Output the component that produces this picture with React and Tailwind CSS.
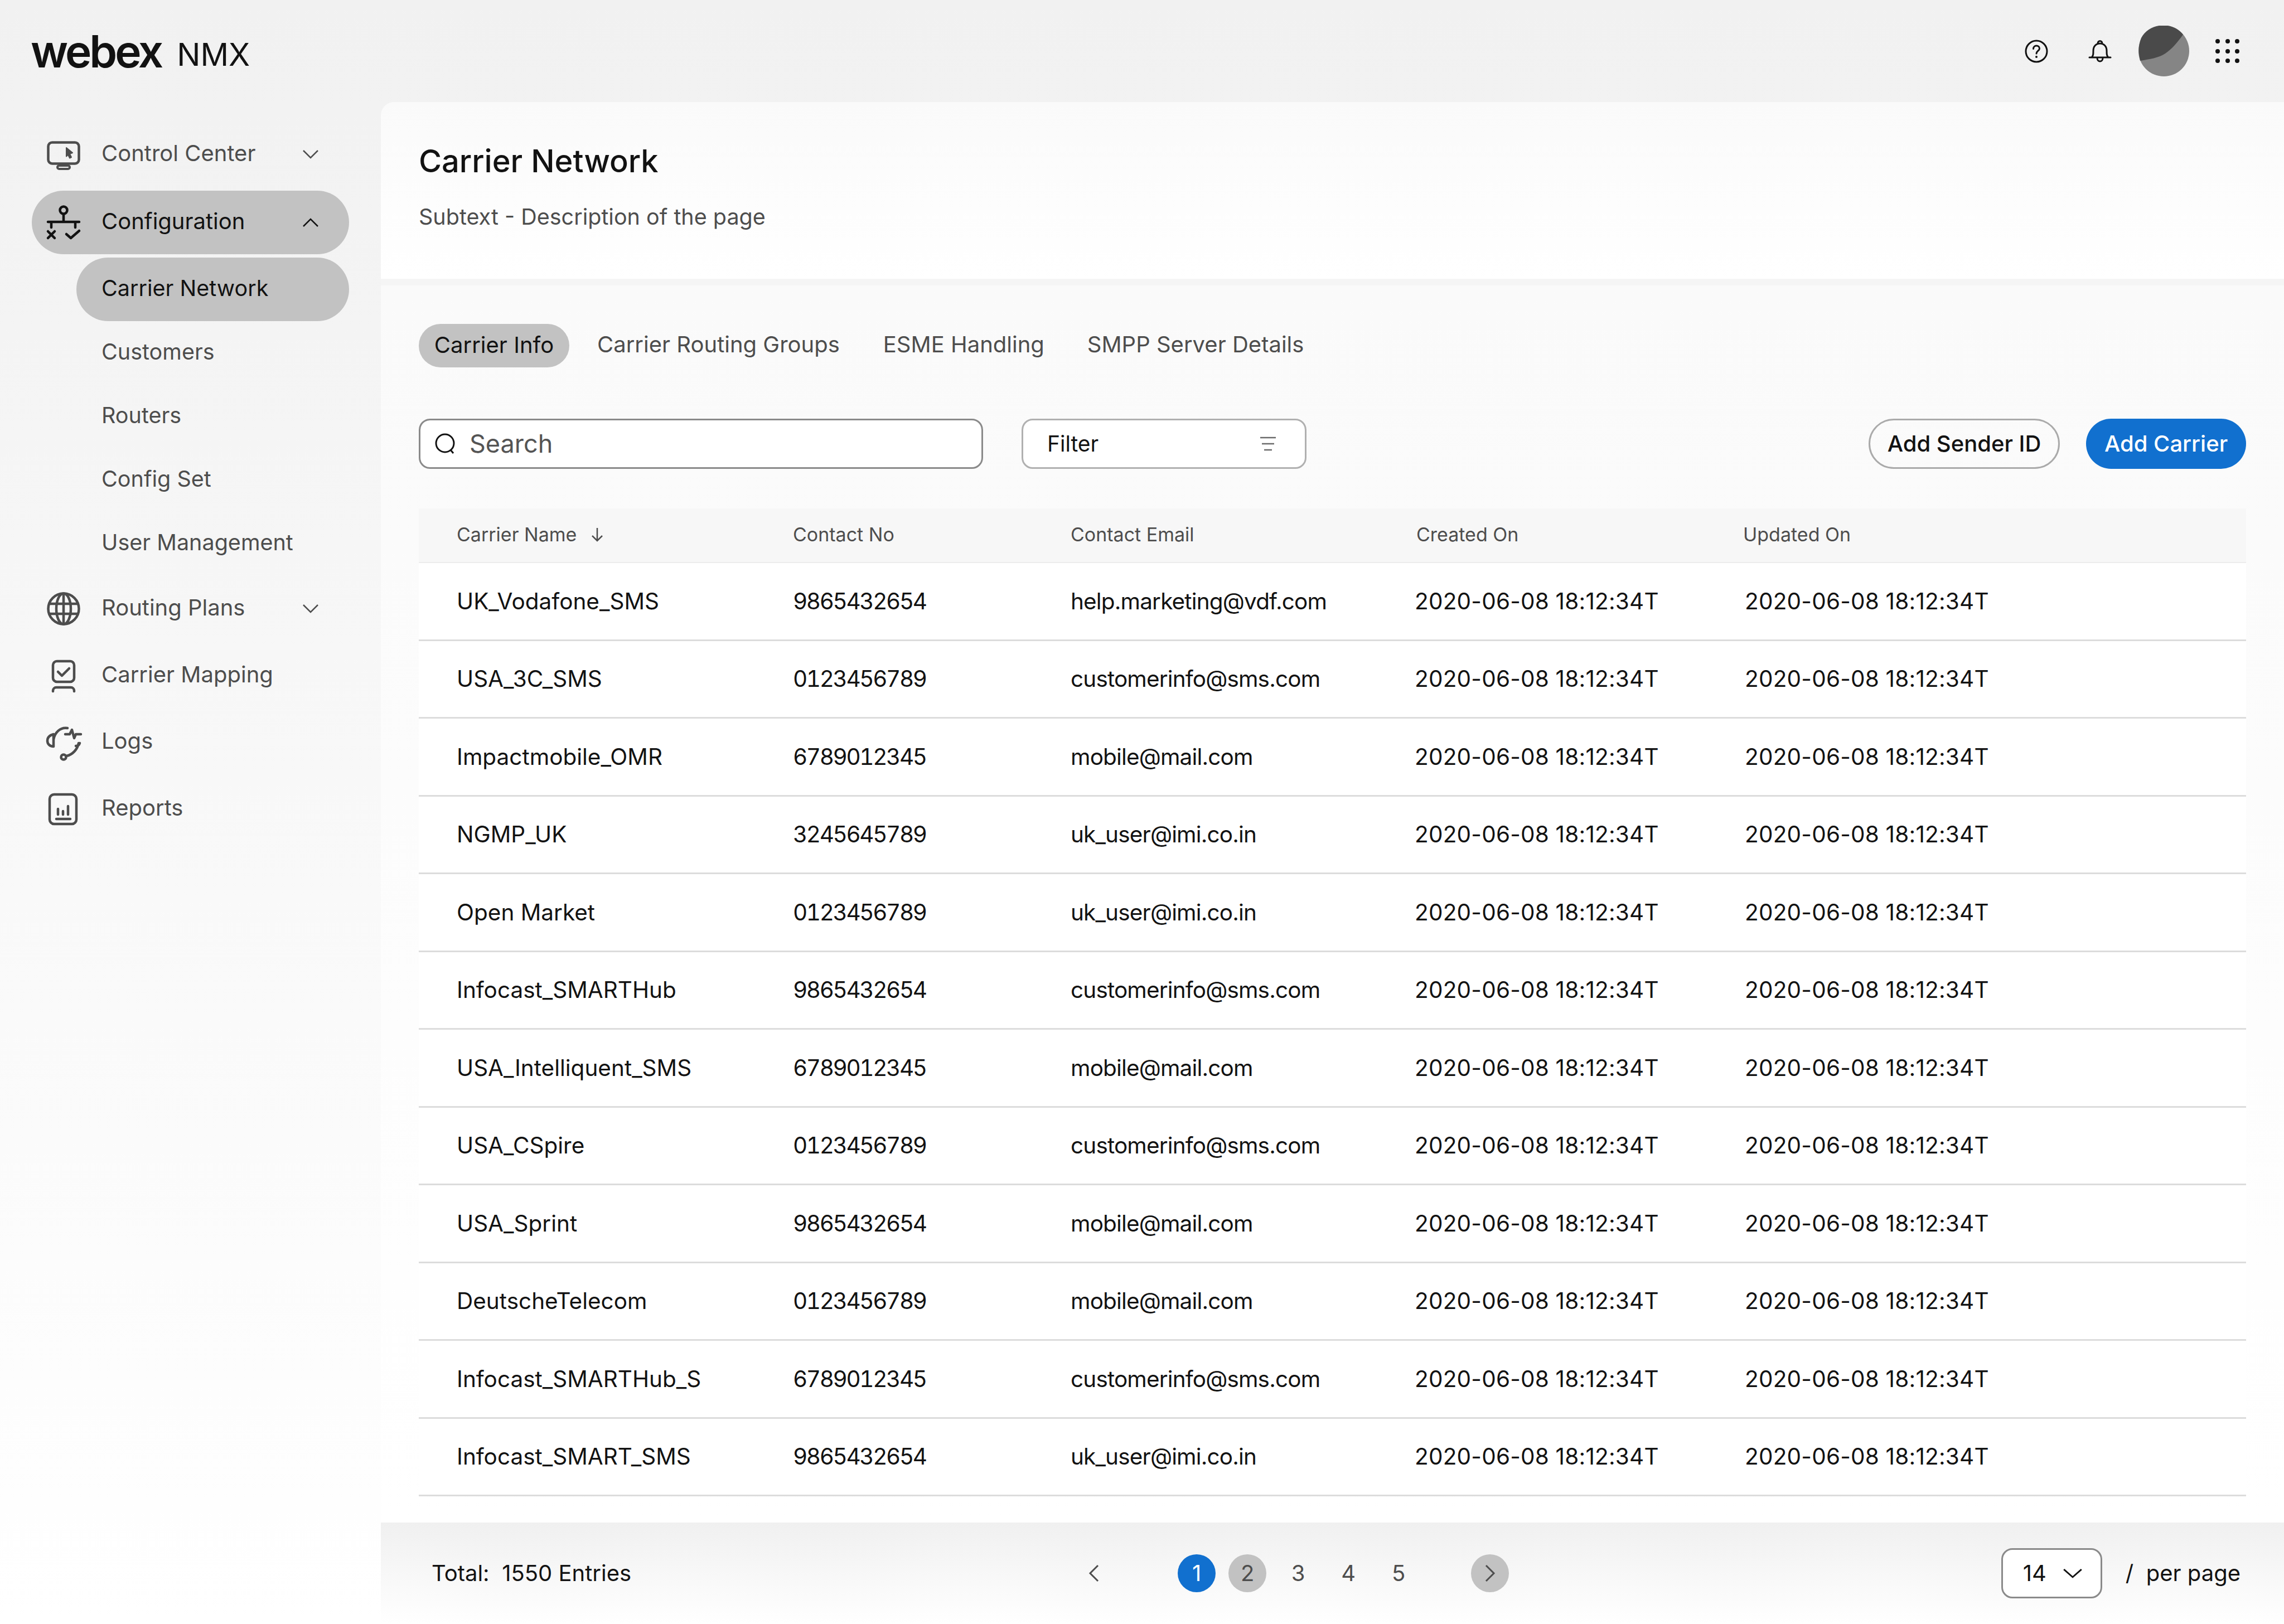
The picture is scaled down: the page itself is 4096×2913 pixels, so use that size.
import React from 'react';

const rows = [
  ['UK_Vodafone_SMS', '9865432654', 'help.marketing@vdf.com'],
  ['USA_3C_SMS', '0123456789', 'customerinfo@sms.com'],
  ['Impactmobile_OMR', '6789012345', 'mobile@mail.com'],
  ['NGMP_UK', '3245645789', 'uk_user@imi.co.in'],
  ['Open Market', '0123456789', 'uk_user@imi.co.in'],
  ['Infocast_SMARTHub', '9865432654', 'customerinfo@sms.com'],
  ['USA_Intelliquent_SMS', '6789012345', 'mobile@mail.com'],
  ['USA_CSpire', '0123456789', 'customerinfo@sms.com'],
  ['USA_Sprint', '9865432654', 'mobile@mail.com'],
  ['DeutscheTelecom', '0123456789', 'mobile@mail.com'],
  ['Infocast_SMARTHub_S', '6789012345', 'customerinfo@sms.com'],
  ['Infocast_SMART_SMS', '9865432654', 'uk_user@imi.co.in'],
];

const stamp = '2020-06-08 18:12:34T';
const gridCols = 'grid grid-cols-[671px_498px_617px_592px_1fr]';

const Icon = ({ children }) => (
  <svg width="60" height="60" viewBox="0 0 60 60" fill="none" stroke="currentColor" strokeWidth="4.5" strokeLinecap="round" strokeLinejoin="round" className="shrink-0 overflow-visible">
    {children}
  </svg>
);

const MonitorIcon = () => (
  <Icon>
    <rect x="2.5" y="8.5" width="55" height="38" rx="7" />
    <rect x="19" y="50" width="22" height="6" rx="3" strokeWidth="4" />
    <path d="M35 18l11 9-5 2 3 6-3 1.5-3-6-3 3z" fill="currentColor" strokeWidth="2" />
  </Icon>
);

const NetworkIcon = () => (
  <Icon>
    <circle cx="30" cy="8" r="6.5" />
    <path d="M30 15v14M2 29h56M8 29v10M51 29v10M2 46l12 12M14 46L2 58M35 51l8 7 15-13" />
  </Icon>
);

const GlobeIcon = () => (
  <Icon>
    <circle cx="30" cy="30" r="27.5" />
    <ellipse cx="30" cy="30" rx="13" ry="27.5" />
    <path d="M30 3v54M5 21h50M5 39h50" />
  </Icon>
);

const MappingIcon = () => (
  <Icon>
    <rect x="11" y="4" width="38" height="37" rx="7" />
    <path d="M20 23l7 7 13-13M11 58v-1a6 6 0 0 1 6-6h26a6 6 0 0 1 6 6v1" />
  </Icon>
);

const LogsIcon = () => (
  <Icon>
    <path d="M37 5C24 3 14 13 12 26M12 16C4 18 1 23 1 28s4 10 11 10zM33 16h8l4-8 4 15 3-7h9M57 32c-2 11-11 21-22 23M52 37c4 0 6-2 7-5" />
    <circle cx="30" cy="57" r="4.5" />
  </Icon>
);

const ReportsIcon = () => (
  <Icon>
    <rect x="5" y="4" width="48" height="53" rx="8" />
    <path d="M20 30v10M29 34v6M38 25v15M17 48h25" />
  </Icon>
);

const Chevron = ({ up, className }) => (
  <svg width="28" height="16" viewBox="0 0 28 16" fill="none" stroke="currentColor" strokeWidth="2.5" preserveAspectRatio="none" className={className}>
    <path d={up ? 'M1 15L14 2l13 13' : 'M1 1l13 13L27 1'} />
  </svg>
);

const NavItem = ({ icon, label, chevron, up, active, className }) => (
  <div className={`flex items-center h-[114px] rounded-full pl-[27px] pr-[55px] ${active ? 'bg-[#c2c2c2] text-[#121212]' : 'text-[#4d4d4d]'} ${className}`}>
    <div className="w-[98px] shrink-0">{icon}</div>
    <span className="flex-1 mb-[4px] whitespace-nowrap">{label}</span>
    {chevron && <Chevron up={up} />}
  </div>
);

const SubItem = ({ label, active }) => (
  <div className={`flex items-center h-[114px] ml-[80px] pl-[45px] pb-[3px] rounded-full text-[39.500px] ${active ? 'bg-[#c2c2c2] text-[#121212]' : 'text-[#4d4d4d]'}`}>
    {label}
  </div>
);

const Sidebar = () => (
  <aside className="w-[683px] shrink-0 pl-[57px] pr-[57px] pt-[37px] text-[40px]">
    <NavItem icon={<MonitorIcon />} label="Control Center" chevron />
    <NavItem icon={<NetworkIcon />} label="Configuration" chevron up active className="mt-[8px]" />
    <div className="mt-[6px]">
      <SubItem label="Carrier Network" active />
      <SubItem label="Customers" />
      <SubItem label="Routers" />
      <SubItem label="Config Set" />
      <SubItem label="User Management" />
    </div>
    <NavItem icon={<GlobeIcon />} label="Routing Plans" chevron className="mt-[3px]" />
    <NavItem icon={<MappingIcon />} label="Carrier Mapping" className="mt-[6px]" />
    <NavItem icon={<LogsIcon />} label="Logs" className="mt-[5px]" />
    <NavItem icon={<ReportsIcon />} label="Reports" className="mt-[6px]" />
  </aside>
);

const TopBar = () => (
  <header className="flex items-center h-[183px] pl-[55px] pr-[80px]">
    <span className="text-[80px] font-semibold leading-none tracking-[-4px] text-[#121212]">webex</span>
    <span className="ml-[28px] mt-[12px] text-[56px] leading-none text-[#121212]">NMX</span>
    <div className="flex items-center ml-auto">
      <svg width="42" height="42" viewBox="0 0 42 42" fill="none" stroke="#121212" strokeWidth="3">
        <circle cx="21" cy="21" r="19" />
        <path d="M15.5 16.5c0-3.200 2.500-5.500 5.500-5.500s5.500 2.200 5.500 5c0 4-5.500 4.500-5.500 9" strokeLinecap="round" />
        <circle cx="21" cy="31" r="2" fill="#121212" stroke="none" />
      </svg>
      <svg width="42" height="42" viewBox="0 0 42 42" fill="none" stroke="#121212" strokeWidth="3" className="ml-[72px]">
        <path d="M6 32c3-3 3-6 3-12 0-8 5-13 12-13s12 5 12 13c0 6 0 9 3 12M2 32h38M16 33c0 8 10 8 10 0M17 7c0-6 8-6 8 0" strokeLinecap="round" />
      </svg>
      <svg width="91" height="91" viewBox="0 0 91 91" className="ml-[48px]">
        <circle cx="45.500" cy="45.500" r="45.500" fill="#858585" />
        <path d="M80 16C62 -8 20 -6 5 22 -1 36 0 50 3 63 20 60 36 58 48 50 60 42 70 30 80 16z" fill="#4a4a4a" />
      </svg>
      <div className="ml-[47px] grid grid-cols-3 gap-[9.500px]">
        {[0, 1, 2, 3, 4, 5, 6, 7, 8].map(i => (
          <span key={i} className="size-[8px] rounded-full bg-[#121212]" />
        ))}
      </div>
    </div>
  </header>
);

const Tabs = () => (
  <div className="flex items-center h-[78px] text-[40px] text-[#4d4d4d]">
    <span className="flex items-center justify-center w-[270px] h-full pb-[3px] rounded-full bg-[#c2c2c2] text-[#121212]">Carrier Info</span>
    <span className="ml-[50px] mb-[4px]">Carrier Routing Groups</span>
    <span className="ml-[78px] mb-[4px]">ESME Handling</span>
    <span className="ml-[77px] mb-[4px]">SMPP Server Details</span>
  </div>
);

const Toolbar = () => (
  <div className="flex items-center h-[90px] mt-[92px] text-[40px]">
    <div className="flex items-center w-[1012px] h-full rounded-[20px] border-[3px] border-[#8a8a8a] bg-white pl-[26px]">
      <svg width="38" height="38" viewBox="0 0 38 38" fill="none" stroke="#121212" strokeWidth="3">
        <circle cx="18" cy="18" r="16" />
        <path d="M28 30l5 6" />
      </svg>
      <span className="ml-[24px] text-[45px] text-[#545454]">Search</span>
    </div>
    <div className="flex items-center justify-between w-[511px] h-full ml-[69px] rounded-[20px] border-[3px] border-[#b0b0b0] bg-white pl-[43px] pr-[51px] text-[#121212]">
      <span className="text-[39px]">Filter</span>
      <svg width="30" height="26" viewBox="0 0 30 26" fill="none" stroke="#6a6a6a" strokeWidth="2.500">
        <path d="M1 2h28M4 13h22M8 24h14" />
      </svg>
    </div>
    <button className="ml-auto w-[343px] h-full rounded-full border-[3px] border-[#aaaaaa] text-[#121212] font-medium">Add Sender ID</button>
    <button className="ml-[47px] w-[287px] h-full rounded-full bg-[#1170cf] text-white font-medium">Add Carrier</button>
  </div>
);

const Table = () => (
  <div className="mt-[71px]">
    <div className={`${gridCols} items-center h-[98px] pb-[3px] bg-[#f7f7f7] border-b-2 border-[#ececec] text-[34px] text-[#4d4d4d]`}>
      <div className="flex items-center pl-[68px]">
        Carrier Name
        <svg width="22" height="28" viewBox="0 0 22 28" fill="none" stroke="#4d4d4d" strokeWidth="2.500" className="ml-[26px]">
          <path d="M11 2v23M2 16l9 9 9-9" />
        </svg>
      </div>
      <div>Contact No</div>
      <div>Contact Email</div>
      <div className="ml-[3px]">Created On</div>
      <div className="-ml-[3px]">Updated On</div>
    </div>
    <div className="bg-white">
      {rows.map(r => (
        <div key={r[0]} className={`${gridCols} items-center h-[139.500px] pt-[2px] border-b-[3px] border-[#dcdcdc] text-[40.500px] text-[#121212]`}>
          <div className="pl-[68px]">{r[0]}</div>
          <div className="tabular-nums tracking-[-2.400px]">{r[1]}</div>
          <div className="tracking-[-0.85px]">{r[2]}</div>
          <div className="tracking-[0.2px]">{stamp}</div>
          <div className="tracking-[0.2px]">{stamp}</div>
        </div>
      ))}
    </div>
  </div>
);

const PageCircle = ({ children, className }) => (
  <span className={`flex items-center justify-center size-[68px] rounded-full ${className}`}>{children}</span>
);

const Footer = () => (
  <footer className="flex items-center h-[182px] shrink-0 pl-[91px] pr-[78px] bg-gradient-to-b from-[#f0f0f0] to-white text-[40px] text-[#121212]">
    <span className="whitespace-pre">Total:  1550 Entries</span>
    <div className="flex items-center ml-[820px] text-[#4d4d4d]">
      <svg width="20" height="32" viewBox="0 0 20 32" fill="none" stroke="#4d4d4d" strokeWidth="3">
        <path d="M17 2L3 16l14 14" />
      </svg>
      <PageCircle className="ml-[140px] bg-[#1170cf] text-white">1</PageCircle>
      <PageCircle className="ml-[23px] bg-[#c2c2c2]">2</PageCircle>
      <PageCircle className="ml-[23px]">3</PageCircle>
      <PageCircle className="ml-[22px]">4</PageCircle>
      <PageCircle className="ml-[22px]">5</PageCircle>
      <PageCircle className="ml-[96px] bg-[#c2c2c2]">
        <svg width="20" height="32" viewBox="0 0 20 32" fill="none" stroke="#4d4d4d" strokeWidth="3">
          <path d="M3 2l14 14L3 30" />
        </svg>
      </PageCircle>
    </div>
    <div className="flex items-center ml-auto">
      <div className="flex items-center w-[181px] h-[90px] rounded-[20px] border-[3px] border-[#8a8a8a] bg-white pl-[36px]">
        14
        <Chevron className="ml-[30px] w-[34px] h-[17px] text-[#121212]" />
      </div>
      <span className="ml-[42px] whitespace-pre">/  per page</span>
    </div>
  </footer>
);

export default function App() {
  return (
    <div className="h-[2913px] w-[4096px] overflow-hidden bg-gradient-to-b from-[#f1f1f1] via-[#f7f7f7] via-40% to-white font-['Inter',sans-serif]">
      <TopBar />
      <div className="flex h-[2730px]">
        <Sidebar />
        <main className="flex flex-col flex-1 min-w-0 rounded-tl-[24px] overflow-hidden bg-[#f5f5f5]">
          <div className="h-[317px] shrink-0 pl-[68px] pt-[75px] bg-gradient-to-b from-[#fafafa] to-white">
            <h1 className="text-[56px] font-medium leading-[62px] text-[#121212]">Carrier Network</h1>
            <p className="mt-[44px] text-[39.500px] leading-[50px] text-[#4d4d4d]">Subtext - Description of the page</p>
          </div>
          <div className="flex-1 mt-[12px] px-[68px] pt-[69px] bg-gradient-to-b from-[#fafafa] to-white">
            <Tabs />
            <Toolbar />
            <Table />
          </div>
          <Footer />
        </main>
      </div>
    </div>
  );
}
